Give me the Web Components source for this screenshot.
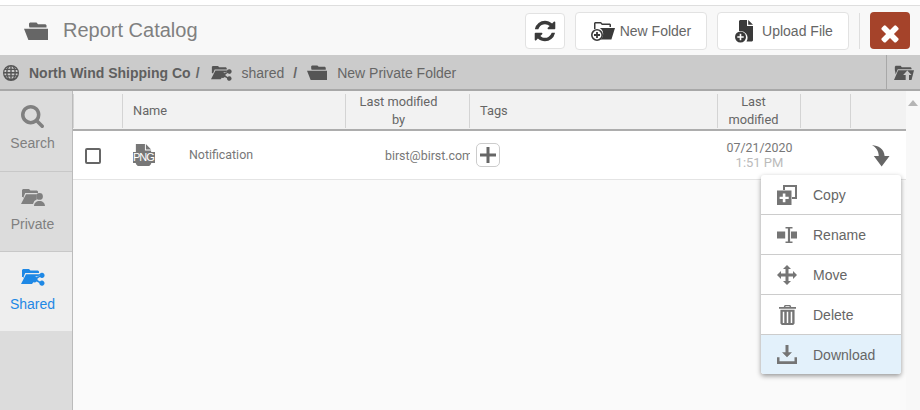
<!DOCTYPE html>
<html>
<head>
<meta charset="utf-8">
<title>Report Catalog</title>
<style>
    html, body { margin: 0; height: 100%; overflow: hidden; }
    body { font-family: "Liberation Sans", Arial, sans-serif; background: #fff; }
</style>
</head>
<body>
<catalog-app></catalog-app>

<script>
// paths split on | are drawn separately so overlaps don't punch holes
const ICONS = {
    open: ['0 0 24 18', 'M5 4V1.600L6 .6h6.500L14 2.200h7.500l1 1V5.600H5.500zM0 6.800h24V18H4.400z'],
    refresh: ['0 0 1792 1792', 'M1639 1056q0 5-1 7-64 268-268 434.500t-478 166.500q-146 0-282.500-55t-243.500-157l-129 129q-19 19-45 19t-45-19-19-45v-448q0-26 19-45t45-19h448q26 0 45 19t19 45-19 45l-137 137q71 66 161 102t187 36q134 0 250-65t186-179q11-17 53-117 8-23 30-23h192q13 0 22.500 9.500t9.500 22.500zm25-800v448q0 26-19 45t-45 19h-448q-26 0-45-19t-19-45 19-45l138-138q-148-137-349-137-134 0-250 65t-186 179q-11 17-53 117-8 23-30 23h-199q-13 0-22.500-9.500t-9.500-22.500v-7q65-268 270-434.500t480-166.500q146 0 284 55.500t245 156.500l130-129q19-19 45-19t45 19 19 45z'],
    close: ['0 0 1792 1792', 'M1490 1322q0 40-28 68l-136 136q-28 28-68 28t-68-28l-294-294-294 294q-28 28-68 28t-68-28l-136-136q-28-28-28-68t28-68l294-294-294-294q-28-28-28-68t28-68l136-136q28-28 68-28t68 28l294 294 294-294q28-28 68-28t68 28l136 136q28 28 28 68t-28 68l-294 294 294 294q28 28 28 68z'],
    search: ['64 128 1664 1664', 'M1216 832q0-185-131.500-316.500t-316.500-131.500-316.500 131.500-131.500 316.500 131.500 316.500 316.500 131.500 316.500-131.500 131.500-316.500zm512 832q0 52-38 90t-90 38q-54 0-90-38l-343-342q-179 124-399 124-143 0-273.500-55.500t-225-150-150-225-55.500-273.500 55.500-273.500 150-225 225-150 273.500-55.500 273.500 55.500 225 150 150 225 55.500 273.500q0 220-124 399l343 343q37 37 37 90z'],
    newfolder: ['0 0 24 20', 'M3 8V2l1-1h6l1.400 1.600H19l1 1V6h-1.500V4.100h-7.600L9.500 2.500H4.500V8z|M8.800 7H24l-3.600 11.400H9.600A7 7 0 0 0 8.800 7z|M0 14a6 6 0 1 1 12 0 6 6 0 0 1-12 0zm1.600 0a4.400 4.400 0 1 0 8.800 0 4.400 4.400 0 0 0-8.800 0zm3.500-3h1.800v2.100H9v1.800H6.900V17H5.100v-2.100H3v-1.800h2.100z'],
    upload: ['0 0 20 24', 'M5 1h7v6h6v14.500l-1 1H11.500A7 7 0 0 0 4 12.100V2zM13.200 1l4.800 4.800h-4.800z|M0 18a5.500 5.500 0 1 1 11 0 5.500 5.500 0 0 1-11 0zm4.700-3.200v2.400H2.300v1.600h2.400v2.400h1.600v-2.400h2.400v-1.600H6.300v-2.400z'],
    globe: ['0 0 16 16', 'M8 0a8 8 0 1 0 0 16A8 8 0 0 0 8 0zm-.7 1.500v2.300H5.100c.5-1.200 1.300-2 2.200-2.300zm1.400 0c.9.300 1.700 1.100 2.200 2.300H8.700zM4.900 2.200c-.4.500-.8 1-1.100 1.600H2.600c.6-.7 1.400-1.300 2.300-1.600zm6.200 0c.9.300 1.700.9 2.300 1.600h-1.200c-.3-.6-.7-1.100-1.100-1.600zM1.800 5.100h1.600c-.1.600-.2 1.200-.2 1.900H1.400c0-.7.100-1.300.4-1.900zm3 0h2.500V7H4.600c0-.7.100-1.300.2-1.900zm3.900 0h2.500c.1.600.2 1.200.2 1.900H8.700zm3.900 0h1.600c.3.600.4 1.200.4 1.900h-1.800c0-.7-.1-1.300-.2-1.900zM1.400 8.400h1.800c0 .7.100 1.300.2 1.900H1.800c-.3-.6-.4-1.200-.4-1.900zm3.200 0h2.700v1.900H4.800c-.1-.6-.2-1.200-.2-1.900zm4.100 0h2.700c0 .7-.1 1.300-.2 1.900H8.700zm4.100 0h1.800c0 .7-.1 1.300-.4 1.900h-1.600c.1-.6.200-1.200.2-1.900zM2.600 11.600h1.200c.3.700.7 1.200 1.100 1.700-.9-.4-1.700-1-2.300-1.700zm2.500 0h2.200v2.400c-.9-.3-1.700-1.100-2.200-2.400zm3.600 0h2.200c-.5 1.300-1.300 2.100-2.200 2.400zm3.500 0h1.200c-.6.700-1.400 1.300-2.300 1.700.4-.5.800-1 1.100-1.700z'],
    shared: ['0 0 24 18', 'M1 9V2l1-1h6l1.400 1.600H17l1 1V5H4.200L2 10.500V9z|M5 6.200h14.500L17 8.500a3.800 3.800 0 0 0-4.500 5.500L11 16H0z|M21 4.800a2.600 2.600 0 1 1-2 4.300l-2.500 1.500a3 3 0 0 1 0 1.300l2.500 1.500a2.600 2.600 0 1 1-.7 1.500l-2.600-1.500a3 3 0 1 1 0-4.100l2.600-1.500A2.600 2.600 0 0 1 21 4.800z'],
    priv: ['0 0 24 18', 'M1 9V2l1-1h6l1.400 1.600H16l1 1V5H4.200L2 10.500V9z|M5 6.200h10.800a4.500 4.500 0 0 0 .2 5 6.500 6.500 0 0 0-4 4.800H0z|M18.500 5a3.400 3.400 0 1 1 0 6.800 3.400 3.400 0 0 1 0-6.800zM13 18c0-3 2.400-5 5.500-5s5.500 2 5.500 5z'],
    up: ['0 0 24 18', 'M1 6V2l1-1h6l1.400 1.600H20l1 1V5H4.500L2 11zM5 6.200h19L21 18h-3v-6h3l-5-5.500L11 12h3v6H0z'],
    png: ['0 0 22 22', 'M3 0h9.500v6.500H19V20l-2 2H5l-2-2zM13.500 0L19 5.500h-5.500z'],
    plus: ['0 0 16 16', 'M6.500 0h3v6.500H16v3H9.500V16h-3V9.500H0v-3h6.500z'],
    turn: ['0 0 20 24', 'M0 1c7 .8 13.500 3.600 14 11.500h5.500L10.700 23.500 2 12.500h5.500C7.500 7.500 4.500 3.500 0 1z'],
    copy: ['0 0 20 20', 'M6 0h14v14h-5v-2h3V2H8v3H6z|M0 5.500h14.500V20H0zm5.800 3v3.200H2.600v2.400h3.200v3.200h2.600v-3.200h3.300v-2.400H8.400V8.500z'],
    rename: ['0 0 20 16', 'M0 4.500h8.200v7H0zM8.500 0h7v1.600h-2.400v12.800h2.400V16h-7v-1.600h2.400V1.600H8.500zM14 4.500h6v7h-6z'],
    move: ['0 0 20 20', 'M10 0l4 4h-2.500v4.500H16V6l4 4-4 4v-2.500h-4.500V16H14l-4 4-4-4h2.500v-4.500H4V14l-4-4 4-4v2.500h4.500V4H6z'],
    trash: ['0 0 18 21', 'M6 0h6l1 2.200h5v1.800H0V2.200h5zM7 1.200l-.3 1h4.600l-.3-1zM1.500 5h15v14.500L15 21H3l-1.500-1.500zM4 7v12h1.600V7zm4.200 0v12h1.600V7zm4.200 0v12H14V7z'],
    download: ['0 0 20 20', 'M8.500 0h3v7.500H15L10 13 5 7.500h3.500zM0 13h2.500v4h15v-4H20v7H0z'],
};

function icon(name, w, h, color) {
    const [box, d] = ICONS[name];
    const paths = d.split('|').map(p => `<path fill-rule="evenodd" d="${p}"/>`).join('');
    return `<svg width="${w}" height="${h}" viewBox="${box}" fill="${color || 'currentColor'}" preserveAspectRatio="none" style="display:block;flex:none">${paths}</svg>`;
}

class CatalogButton extends HTMLElement {
    connectedCallback() {
        const shadow = this.attachShadow({ mode: 'open' });
        const w = this.getAttribute('iw');
        const h = this.getAttribute('ih');
        shadow.innerHTML = `
            <style>
                :host {
                    display: flex; align-items: center; justify-content: center; gap: var(--gap, 5px);
                    box-sizing: border-box; height: 38px;
                    background: #fff; border: 1px solid #e2e2e2; border-radius: 4px;
                    color: #666; font-size: 14px;
                }
            </style>
            ${icon(this.getAttribute('icon'), w, h, '#3a3a3a')}
            <slot></slot>
        `;
    }
}
customElements.define('catalog-button', CatalogButton);

class CatalogHeader extends HTMLElement {
    connectedCallback() {
        const shadow = this.attachShadow({ mode: 'open' });
        shadow.innerHTML = `
            <style>
                :host {
                    display: flex; align-items: center; box-sizing: border-box;
                    height: 50px; margin-top: 5px; padding: 0 10px 0 24px;
                    background: #f8f8f8; border-top: 1px solid #dedede;
                }
                h1 { margin: 0 0 0 15px; font-size: 20px; font-weight: normal; color: #808080; flex: 1; }
                .refresh { width: 40px; height: 36px; margin-right: 10px; }
                .folder { width: 132px; margin-right: 10px; }
                .file { width: 132px; --gap: 7px; padding-left: 2px; }
                .rule { width: 1px; height: 36px; background: #dedede; margin: 0 10px; }
                .close { width: 40px; height: 37px; padding-top: 5px; box-sizing: border-box; background: #a5432a; border-radius: 4px; display: flex; align-items: center; justify-content: center; }
            </style>
            ${icon('open', 24, 18, '#666')}
            <h1>Report Catalog</h1>
            <catalog-button class="refresh" icon="refresh" iw="24" ih="24"></catalog-button>
            <catalog-button class="folder" icon="newfolder" iw="24" ih="20">New Folder</catalog-button>
            <catalog-button class="file" icon="upload" iw="20" ih="24">Upload File</catalog-button>
            <div class="rule"></div>
            <div class="close">${icon('close', 26, 26, '#fff')}</div>
        `;
    }
}
customElements.define('catalog-header', CatalogHeader);

class CatalogCrumbs extends HTMLElement {
    connectedCallback() {
        const shadow = this.attachShadow({ mode: 'open' });
        shadow.innerHTML = `
            <style>
                :host {
                    display: flex; align-items: center; box-sizing: border-box;
                    height: 36px; padding: 1px 0 0 3px;
                    background: #cbcbcb; border-bottom: 2px solid #a8a8a8;
                    color: #666; font-size: 14px;
                }
                b { margin-left: 10px; color: #5f5f5f; }
                .sl { margin: 0 11px 0 5px; font-weight: bold; }
                .name { margin-left: 10px; }
                .sl2 { margin: 0 10px 0 9px; font-weight: bold; }
                .end { margin-left: auto; width: 34px; height: 35px; margin-top: -1px; border-left: 1px solid #a8a8a8; display: flex; align-items: center; justify-content: center; box-sizing: border-box; }
            </style>
            ${icon('globe', 16, 16, '#555')}
            <b>North Wind Shipping Co</b><span class="sl">/</span>
            ${icon('shared', 21, 16, '#555')}
            <span class="name">shared</span><span class="sl2">/</span>
            ${icon('open', 20, 15, '#555')}
            <span class="name">New Private Folder</span>
            <div class="end">${icon('up', 20, 15, '#555')}</div>
        `;
    }
}
customElements.define('catalog-crumbs', CatalogCrumbs);

class SideItem extends HTMLElement {
    connectedCallback() {
        const shadow = this.attachShadow({ mode: 'open' });
        const w = this.getAttribute('iw');
        const h = this.getAttribute('ih');
        shadow.innerHTML = `
            <style>
                :host {
                    display: flex; flex-direction: column; align-items: center; box-sizing: border-box;
                    height: 80px; padding-right: 7px; border-bottom: 1px solid #c8c8c8; color: #808080; font-size: 14px;
                }
                :host([first]) { height: 81px; }
                :host([active]) { background: #eee; color: #1e88e5; border-bottom: 0; height: 79px; }
                .i { height: 24px; margin-top: 13px; margin-bottom: 7px; display: flex; align-items: center; }
            </style>
            <div class="i">${icon(this.getAttribute('icon'), w, h)}</div>
            <slot></slot>
        `;
    }
}
customElements.define('side-item', SideItem);

class CatalogSide extends HTMLElement {
    connectedCallback() {
        this.attachShadow({ mode: 'open' }).innerHTML = `
            <style>
                :host { display: block; box-sizing: border-box; width: 73px; background: #dcdcdc; border-right: 1px solid #bbb; flex: none; }
            </style>
            <slot></slot>
        `;
    }
}
customElements.define('catalog-side', CatalogSide);

class TableHead extends HTMLElement {
    connectedCallback() {
        this.attachShadow({ mode: 'open' }).innerHTML = `
            <style>
                :host {
                    display: grid; grid-template-columns: var(--cols);
                    box-sizing: border-box; height: 40px; padding-top: 3px;
                    background: #f2f2f2; border-bottom: 2px solid #adadad;
                    font: 12.8px/18px Roboto, sans-serif; color: #666;
                }
                div { border-left: 1px solid #d4d4d4; height: 34px; display: flex; align-items: center; box-sizing: border-box; padding-left: 10px; }
                div:first-child { border: 0; }
                .c { justify-content: center; text-align: center; padding: 0 18px 0 0; }
                .d { padding-right: 11px; }
            </style>
            <div></div>
            <div>Name</div>
            <div class="c">Last modified<br>by</div>
            <div>Tags</div>
            <div class="c d">Last<br>modified</div>
            <div></div>
            <div></div>
        `;
    }
}
customElements.define('table-head', TableHead);

class TableRow extends HTMLElement {
    connectedCallback() {
        this.attachShadow({ mode: 'open' }).innerHTML = `
            <style>
                :host {
                    display: grid; grid-template-columns: var(--cols); align-items: center;
                    box-sizing: border-box; height: 49px; background: #fff;
                    border-bottom: 1px solid #e4e4e4;
                    font: 12.4px Roboto, sans-serif; color: #777;
                }
                .check { width: 12px; height: 12px; border: 2px solid #666; border-radius: 2px; margin: 1px 0 0 12px; }
                .name { display: flex; align-items: center; padding-left: 11px; }
                .file { position: relative; width: 21px; height: 22px; color: #777; }
                .file span { position: absolute; left: 0; top: 8px; font: 11px/11px "Liberation Sans", sans-serif; color: #fff; background: #777; letter-spacing: -1px; padding: 0 1px 0 0; }
                .label { margin-left: 35px; position: relative; top: -1px; }
                .by { overflow: hidden; white-space: nowrap; text-align: right; margin-right: -1px; }
                .by span { display: inline-block; margin-right: -3px; }
                .add { margin-left: 7px; width: 24px; height: 24px; box-sizing: border-box; border: 1px solid #ccc; border-radius: 5px; display: flex; align-items: center; justify-content: center; color: #666; }
                .date { text-align: center; line-height: 15px; margin-left: 2px; }
                .date small { display: block; font-size: 13px; color: #bbb; }
                .go { grid-column: 7; margin-left: 22px; color: #666; }
            </style>
            <div><div class="check"></div></div>
            <div class="name"><div class="file">${icon('png', 21, 22)}<span>PNG</span></div><span class="label">Notification</span></div>
            <div class="by"><span>birst@birst.com</span></div>
            <div><div class="add">${icon('plus', 16, 16)}</div></div>
            <div class="date">07/21/2020<small>1:51 PM</small></div>
            <div class="go">${icon('turn', 18, 23)}</div>
        `;
    }
}
customElements.define('table-row', TableRow);

class MenuItem extends HTMLElement {
    connectedCallback() {
        const shadow = this.attachShadow({ mode: 'open' });
        shadow.innerHTML = `
            <style>
                :host {
                    display: flex; align-items: center; box-sizing: border-box;
                    height: 40px; border-bottom: 1px solid #ccc; color: #666; font-size: 14px;
                }
                :host(:last-child) { border-bottom: 0; height: 39px; }
                :host([active]) { background: #e3f1fb; }
                .i { width: 20px; margin-left: 16px; margin-right: 16px; display: flex; justify-content: center; color: #757575; }
            </style>
            <div class="i">${icon(this.getAttribute('icon'), this.getAttribute('iw'), this.getAttribute('ih'))}</div>
            <slot></slot>
        `;
    }
}
customElements.define('menu-item', MenuItem);

class ContextMenu extends HTMLElement {
    connectedCallback() {
        this.attachShadow({ mode: 'open' }).innerHTML = `
            <style>
                :host {
                    position: absolute; left: 761px; top: 175px; width: 140px;
                    background: #fff; border-radius: 3px; overflow: hidden;
                    box-shadow: 0 2px 5px rgba(0,0,0,.4);
                }
            </style>
            <slot></slot>
        `;
    }
}
customElements.define('context-menu', ContextMenu);

class CatalogApp extends HTMLElement {
    connectedCallback() {
        this.attachShadow({ mode: 'open' }).innerHTML = `
            <style>
                :host { display: flex; flex-direction: column; height: 100vh; --cols: 49px 223px 124px 248px 83px 50px 56px; }
                .body { flex: 1; display: flex; min-height: 0; }
                .main { flex: 1; background: #fafafa; display: flex; flex-direction: column; }
                .scroll { width: 14px; flex: none; background: #f8f8f8; display: flex; justify-content: center; padding-top: 9px; box-sizing: border-box; }
                .tri { width: 0; height: 0; border: 5px solid transparent; border-top: 0; border-bottom: 6px solid #b5b5b5; }
            </style>
            <catalog-header></catalog-header>
            <catalog-crumbs></catalog-crumbs>
            <div class="body">
                <catalog-side>
                    <side-item icon="search" iw="23" ih="23" first>Search</side-item>
                    <side-item icon="priv" iw="24" ih="18">Private</side-item>
                    <side-item icon="shared" iw="24" ih="18" active>Shared</side-item>
                </catalog-side>
                <div class="main">
                    <table-head></table-head>
                    <table-row></table-row>
                </div>
                <div class="scroll"><div class="tri"></div></div>
            </div>
            <context-menu>
                <menu-item icon="copy" iw="20" ih="20">Copy</menu-item>
                <menu-item icon="rename" iw="20" ih="16">Rename</menu-item>
                <menu-item icon="move" iw="20" ih="20">Move</menu-item>
                <menu-item icon="trash" iw="17" ih="20">Delete</menu-item>
                <menu-item icon="download" iw="20" ih="19" active>Download</menu-item>
            </context-menu>
        `;
    }
}
customElements.define('catalog-app', CatalogApp);
</script>
</body>
</html>
